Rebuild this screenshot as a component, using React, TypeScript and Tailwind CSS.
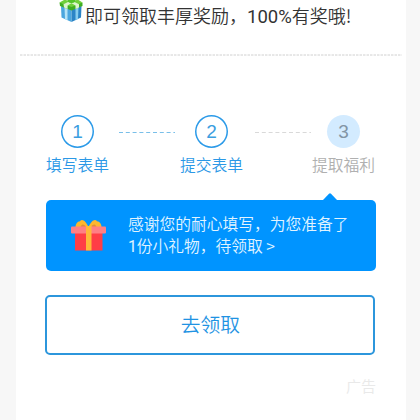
import React from 'react';
import { clsx } from 'clsx';

const steps = [
  { number: 1, label: '填写表单', done: true },
  { number: 2, label: '提交表单', done: true },
  { number: 3, label: '提取福利', done: false },
];

function GreenGift() {
  return (
    <svg width="25" height="23" viewBox="0 0 25 23" className="shrink-0">
      {/* box */}
      <path d="M2 6 L12.5 9 V22 L2.5 17.5 Z" fill="#4ba6de" />
      <path d="M12.5 9 L22.5 6 L22 17.5 L12.5 22 Z" fill="#2b84c6" />
      <path d="M5.5 7 L8.5 8 V20.2 L6 19 Z" fill="#b5e3f7" />
      <path d="M16.5 8 L19.5 7 L19 19 L16.5 20.2 Z" fill="#86ccef" />
      {/* lid */}
      <path d="M0.5 2.5 L12.5 5 L23.5 2.5 V6 L12.5 10.5 L1 6 Z" fill="#3fae22" />
      <path d="M0.5 2.5 L5 0 H19.5 L23.5 2.5 L12.5 7 Z" fill="#6fd03a" />
      {/* ribbon */}
      <path d="M4.5 4.2 L13 0 H17.5 L8.6 5.4 V9 L5 7.6 Z" fill="#dcf6cc" />
      <path d="M20 4.2 L11.5 0 H7 L16.5 5.4 V9 L20 7.6 Z" fill="#dcf6cc" />
      <path d="M12.5 3 C10 3.2 8 1.6 8.5 0 H16.5 C17 1.6 15 3.2 12.5 3 Z" fill="#54c42a" />
    </svg>
  );
}

function RedGift() {
  return (
    <svg width="35" height="33" viewBox="0 0 35 33" className="shrink-0">
      <path d="M17.5 8 C15 2 11 -1 9 2.2 C6 2.5 4.5 5 4.5 8 Z" fill="#fcb72e" />
      <path d="M17.5 8 C20 2 24 -1 26 2.2 C29 2.5 30.5 5 30.5 8 Z" fill="#fcb72e" />
      <path d="M9.5 8 C10.5 5 12.5 4.5 15 8 Z M25.5 8 C24.5 5 22.5 4.5 20 8 Z" fill="#e08d38" />
      <rect x="4" y="13" width="27.5" height="18.5" fill="#ff3e46" />
      <rect x="0" y="7.5" width="35" height="7" rx="1" fill="#ff8085" />
      <rect x="15" y="7" width="5.5" height="24.5" fill="#ffb938" />
    </svg>
  );
}

function Connector({ active }: { active: boolean }) {
  return (
    <svg
      width="56"
      height="1"
      viewBox="0 0 56 1"
      className={clsx('mt-[17px] shrink-0', active ? 'ml-[10px] mr-[5px]' : 'ml-[12px] mr-px')}
    >
      <line
        x1="0"
        y1="0.5"
        x2="56"
        y2="0.5"
        strokeDasharray="4 2.8"
        stroke={active ? '#79bfe9' : '#d9d9d9'}
      />
    </svg>
  );
}

export default function App() {
  return (
    <div className="h-[420px] w-[420px] overflow-hidden bg-[#f7f7f7] pl-4 pr-[14px] font-['Noto_Sans_CJK_SC',sans-serif] font-[350]">
      <main className="flex h-full flex-col bg-white">
        <div className="flex h-[54px] items-start pl-[43px]">
          <GreenGift />
          <h1 className="ml-px mt-[2px] whitespace-nowrap text-[18px] font-[350] leading-[26px] text-[#333]">
            即可领取丰厚奖励，
            <span className="font-['Roboto',sans-serif] text-[18.5px] font-normal">100%</span>有奖哦!
          </h1>
        </div>

        <svg width="382" height="2" viewBox="0 0 382 2" className="ml-1 shrink-0">
          <line x1="0" y1="1" x2="382" y2="1" stroke="#d0d0d0" strokeDasharray="2.5 1" />
        </svg>

        {/* Steps */}
        <div className="mt-[59px] flex h-[78px] items-start pl-[30px]">
          {steps.map((step, i) => (
            <React.Fragment key={step.number}>
              {i > 0 && <Connector active={i === 1} />}
              <div className="flex w-[63px] shrink-0 flex-col items-center">
                <span
                  className={clsx(
                    "flex h-[33px] w-[33px] items-center justify-center rounded-full font-['Liberation_Sans',sans-serif] text-[19px] font-normal leading-none",
                    step.done
                      ? 'text-[#3b9ee0] shadow-[inset_0_0_0_1.5px_#2b9ae8]'
                      : 'bg-[#d3ebff] text-[#8295a5]',
                  )}
                >
                  {step.number}
                </span>
                <span
                  className={clsx(
                    'mt-[5px] whitespace-nowrap text-[15.75px] leading-6',
                    step.done ? 'text-[#2b98e6]' : 'text-[#b0b0b0]',
                  )}
                >
                  {step.label}
                </span>
              </div>
            </React.Fragment>
          ))}
        </div>

        {/* Reward notice */}
        <svg width="14" height="7" viewBox="0 0 14 7" className="ml-[307px] shrink-0">
          <path d="M0 7 L6 0.7 Q7 0 8 0.7 L14 7 Z" fill="#0094ff" />
        </svg>
        <section className="ml-[30px] flex h-[71px] w-[330px] shrink-0 items-center rounded-[5px] bg-[#0094ff] pl-[25px]">
          <RedGift />
          <p className="mb-px ml-[22px] whitespace-nowrap text-[15.75px] leading-[22px] text-[#e2f4ff]">
            感谢您的耐心填写，为您准备了
            <br />
            <span className="font-['Roboto',sans-serif] font-normal">1</span>份小礼物，待领取 &gt;
          </p>
        </section>

        <button className="ml-[29px] mt-6 h-[60px] w-[330px] shrink-0 rounded-[5px] border-2 border-[#2c96dc] bg-white pb-[2px] pl-px text-[19.75px] leading-none text-[#1f93e3]">
          去领取
        </button>

        <p className="mr-[30px] mt-[19px] text-right text-[15px] leading-6 text-[#e9e9e9]">广告</p>
      </main>
    </div>
  );
}
